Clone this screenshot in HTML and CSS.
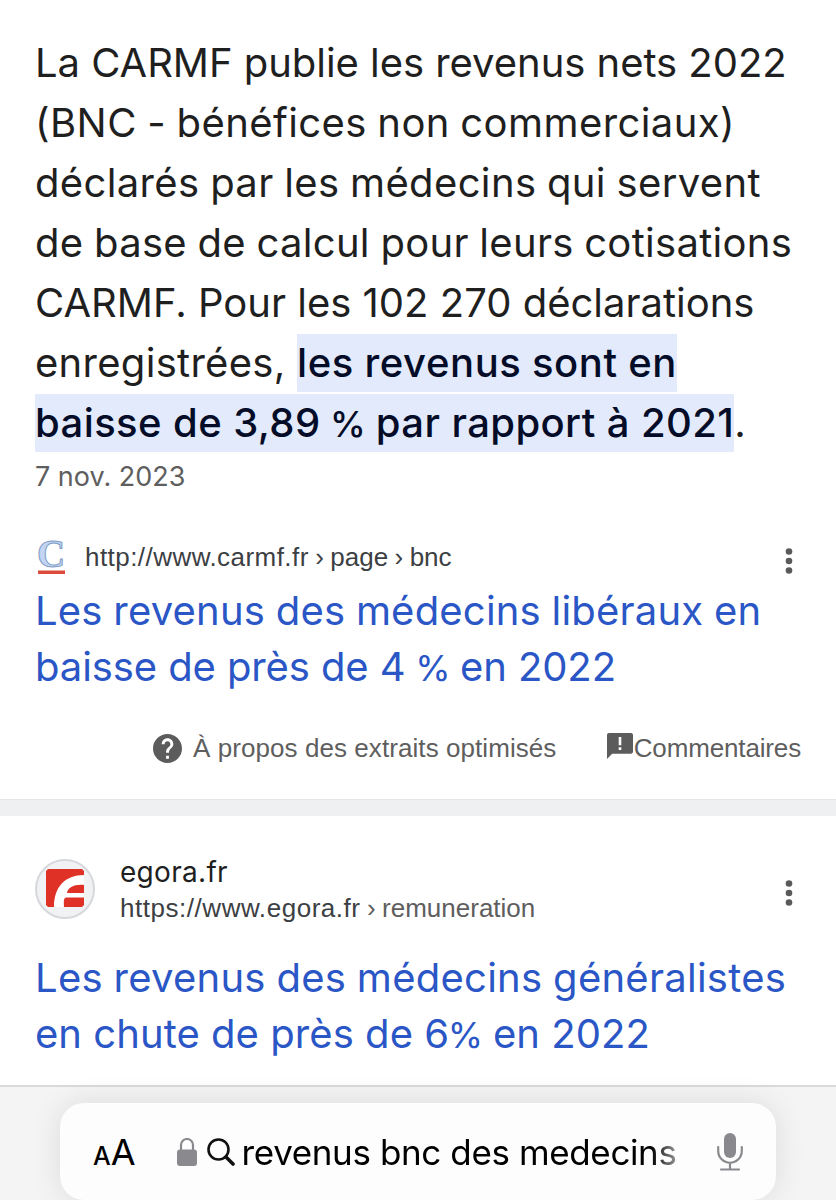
FILE: index.html
```html
<!DOCTYPE html>
<html lang="fr">
<head>
  <meta charset="UTF-8" />
  <meta name="viewport" content="width=device-width, initial-scale=1.0"/>
  <title>revenus bnc des medecins</title>
  <link rel="stylesheet" href="styles.css">
</head>
<body>

  <main class="results">
    <section class="result featured">
      <p class="snippet">
        <span class="line l1">La CARMF publie les revenus nets 2022</span>
        <span class="line l2">(BNC - bénéfices non commerciaux)</span>
        <span class="line l3">déclarés par les médecins qui servent</span>
        <span class="line l4">de base de calcul pour leurs cotisations</span>
        <span class="line l5">CARMF. Pour les 102 270 déclarations</span>
        <span class="line l6">enregistrées, <mark>les revenus sont en</mark></span>
        <span class="line l7"><mark>baisse de 3,89 <span class="pct">%</span> par rapport à 2021</mark>.</span>
      </p>
      <p class="date">7 nov. 2023</p>

      <div class="source">
        <svg class="carmf-icon" viewBox="0 0 32 36">
          <text class="carmf-letter" x="2" y="28">C</text>
          <rect x="3" y="31.5" width="27" height="3.5" fill="#dc4a3c"/>
        </svg>
        <span class="url url-carmf">http://www.carmf.fr<span class="path"> › page › bnc</span></span>
        <svg class="more" viewBox="0 0 8 28" fill="#5a5a5a">
          <circle cx="4" cy="4.5" r="3.3"/><circle cx="4" cy="14" r="3.3"/><circle cx="4" cy="23.5" r="3.3"/>
        </svg>
      </div>
      <h3 class="title">
        <span class="line t1">Les revenus des médecins libéraux en</span>
        <span class="line t2">baisse de près de 4 <span class="pct">%</span> en 2022</span>
      </h3>

      <div class="feedback">
        <svg class="help-icon" viewBox="2 2 20 20" fill="#5c5c5c">
          <path d="M12 2C6.48 2 2 6.48 2 12s4.48 10 10 10 10-4.48 10-10S17.52 2 12 2zm1 17h-2v-2h2v2zm2.07-7.75l-.9.92C13.45 12.9 13 13.5 13 15h-2v-.5c0-1.1.45-2.1 1.17-2.83l1.24-1.26c.37-.36.59-.86.59-1.41 0-1.1-.9-2-2-2s-2 .9-2 2H8c0-2.21 1.79-4 4-4s4 1.79 4 4c0 .88-.36 1.68-.93 2.25z"/>
        </svg>
        <span class="about">À propos des extraits optimisés</span>
        <svg class="comment-icon" viewBox="2 2 20 20" fill="#5c5c5c">
          <path d="M20.5 2H3.5C2.700 2 2 2.700 2 3.500V22l4-4h14.500c.8 0 1.500-.7 1.500-1.500v-13c0-.8-.7-1.500-1.500-1.500zM13 15h-2v-2h2v2zm0-3.500h-2V5h2v6.500z"/>
        </svg>
        <span class="comments">Commentaires</span>
      </div>
    </section>

    <section class="result">
      <div class="site">
        <svg class="egora-icon" viewBox="0 0 60 60">
          <circle cx="30" cy="30" r="29" fill="#f1f2f4" stroke="#d6d8dc" stroke-width="2"/>
          <path d="M13 10H47L49 12V46L47 48H13L11 46V12z" fill="#e03127"/>
          <path d="M19 48C19 28 30 16 49 16V26C40 25 33 28 32 34H49V38.5H31C28 39 29 44 29 48z" fill="#fff"/>
        </svg>
        <div class="site-text">
          <span class="site-name">egora.fr</span>
          <span class="url url-egora">https://www.egora.fr<span class="path crumb"> › remuneration</span></span>
        </div>
        <svg class="more" viewBox="0 0 8 28" fill="#5a5a5a">
          <circle cx="4" cy="4.5" r="3.3"/><circle cx="4" cy="14" r="3.3"/><circle cx="4" cy="23.5" r="3.3"/>
        </svg>
      </div>
      <h3 class="title">
        <span class="line t3">Les revenus des médecins généralistes</span>
        <span class="line t4">en chute de près de 6<span class="pct">%</span> en 2022</span>
      </h3>
    </section>
  </main>

  <footer class="toolbar">
    <div class="address-bar">
      <span class="text-size"><small>A</small>A</span>
      <svg class="lock" viewBox="0 0 20 28">
        <path d="M4 13V7a6 6 0 0 1 12 0v6" fill="none" stroke="#8a8a8e" stroke-width="2.2"/>
        <rect x="0" y="11.5" width="20" height="16.5" rx="3" fill="#8a8a8e"/>
      </svg>
      <svg class="search" viewBox="0 0 28 28" fill="none" stroke="#111" stroke-width="2.6" stroke-linecap="round">
        <circle cx="11.5" cy="11.5" r="10"/><path d="M19 19l7 7" stroke-width="3.6"/>
      </svg>
      <span class="query">revenus bnc des medecins</span>
      <svg class="mic" viewBox="0 0 26 38">
        <rect x="7" y="0" width="12" height="25" rx="6" fill="#8a8a8e"/>
        <path d="M1.2 14v4a11.8 11.8 0 0 0 23.6 0v-4M13 30v6M4 36.5h18" fill="none" stroke="#8a8a8e" stroke-width="2.2" stroke-linecap="round"/>
      </svg>
    </div>
  </footer>

</body>
</html>
```
FILE: styles.css
```css
body {
  margin: 0;
  font-family: Inter, 'Liberation Sans', sans-serif;
  background-color: #fff;
  color: #1f1f1f;
  width: 836px;
  height: 1200px;
  overflow: hidden;
  display: flex;
  flex-direction: column;
}
.results {
  height: 1085px;
}
.result {
  padding: 0 35px;
}
.featured {
  height: 800px;
  padding-top: 33px;
  box-sizing: border-box;
  border-bottom: 1px solid #e4e5e8;
}
.featured + .result {
  border-top: 16px solid #eff0f2;
}
.line {
  display: block;
  white-space: nowrap;
}
.snippet {
  margin: 0;
  font-size: 40px;
  line-height: 60px;
}
.l1 { letter-spacing: -0.04px; }
.l2 { letter-spacing: 0.42px; word-spacing: -1.2px; }
.l3 { letter-spacing: 0.36px; word-spacing: -1px; }
.l4 { letter-spacing: 0.3px; word-spacing: -1px; }
.l6 { letter-spacing: 0.29px; }
.l6 mark { letter-spacing: 0.6px; word-spacing: -0.8px; }
.l7 mark { letter-spacing: 0.41px; }
mark {
  display: inline-block;
  height: 58px;
  line-height: 58px;
  vertical-align: top;
  margin-top: 1px;
  background: #e2eafc;
  color: #040c28;
  font-weight: 500;
}
.pct {
  font-size: 36px;
  line-height: 1;
  margin: 0 -1.5px;
}
.date {
  margin: 4px 0 0;
  font-size: 27px;
  line-height: 40px;
  color: #5e5e5e;
}
.source {
  display: flex;
  align-items: center;
  margin-top: 40px;
  height: 40px;
}
.carmf-icon {
  width: 32px;
  height: 36px;
  overflow: visible;
}
.carmf-letter {
  font: bold 39px 'Liberation Serif', serif;
  fill: #c3d5f2;
  stroke: #7f9cc6;
}
.url {
  font: 26px/34px 'Liberation Sans', sans-serif;
  color: #3c4043;
  white-space: nowrap;
}
.url-carmf {
  margin-left: 18px;
  letter-spacing: 0.45px;
}
.url-egora {
  letter-spacing: 0.54px;
}
.path {
  letter-spacing: 0;
  word-spacing: -0.8px;
}
.crumb {
  color: #5e5e5e;
}
.more {
  width: 8px;
  height: 28px;
  margin-top: 8px;
  margin-left: auto;
  margin-right: 8px;
}
.title {
  margin: 6px 0 0;
  font-size: 40px;
  font-weight: 400;
  line-height: 56px;
  color: #2a56c6;
}
.t1 { letter-spacing: 0.2px; word-spacing: -0.8px; }
.t2 { letter-spacing: -0.1px; }
.t3 { letter-spacing: 0.26px; word-spacing: -0.8px; }
.t4 { letter-spacing: 0.05px; }
.feedback {
  display: flex;
  align-items: center;
  margin-top: 33px;
  height: 40px;
  padding-left: 118px;
  font: 26px/40px 'Liberation Sans', sans-serif;
  color: #5e5e5e;
  white-space: nowrap;
}
.about {
  letter-spacing: 0.07px;
}
.comments {
  letter-spacing: -0.15px;
}
.help-icon {
  width: 29px;
  height: 29px;
  margin-right: 11px;
}
.comment-icon {
  width: 26px;
  height: 26px;
  margin-left: auto;
  margin-right: 1px;
  margin-bottom: 5px;
}
.site {
  display: flex;
  align-items: center;
  padding-top: 33px;
  height: 80px;
}
.site + .title {
  margin-top: 21px;
}
.egora-icon {
  width: 60px;
  height: 60px;
}
.site-text {
  display: flex;
  flex-direction: column;
  margin-left: 25px;
}
.site-name {
  font-size: 28px;
  line-height: 38px;
  letter-spacing: 0.3px;
}
.toolbar {
  height: 115px;
  box-sizing: border-box;
  padding: 16px 60px 0;
  background: #f4f4f5;
  border-top: 2px solid #d9d9d9;
}
.address-bar {
  display: flex;
  align-items: center;
  height: 97px;
  border-radius: 24px;
  background: #fdfdfd;
  box-shadow: 0 0 30px rgba(0, 0, 0, 0.1);
}
.text-size {
  margin-left: 33px;
  font-size: 36px;
  color: #000;
}
.text-size small {
  font-size: 25px;
  font-weight: 500;
}
.lock {
  width: 20px;
  height: 28px;
  margin-left: 41px;
}
.search {
  width: 28px;
  height: 28px;
  margin-left: 10px;
}
.query {
  margin-left: 7px;
  font-size: 35px;
  letter-spacing: -0.38px;
  color: transparent;
  background: linear-gradient(to right, #000 94%, #999 100%);
  -webkit-background-clip: text;
  background-clip: text;
  white-space: nowrap;
}
.mic {
  width: 26px;
  height: 38px;
  margin-left: auto;
  margin-right: 33px;
}
```
